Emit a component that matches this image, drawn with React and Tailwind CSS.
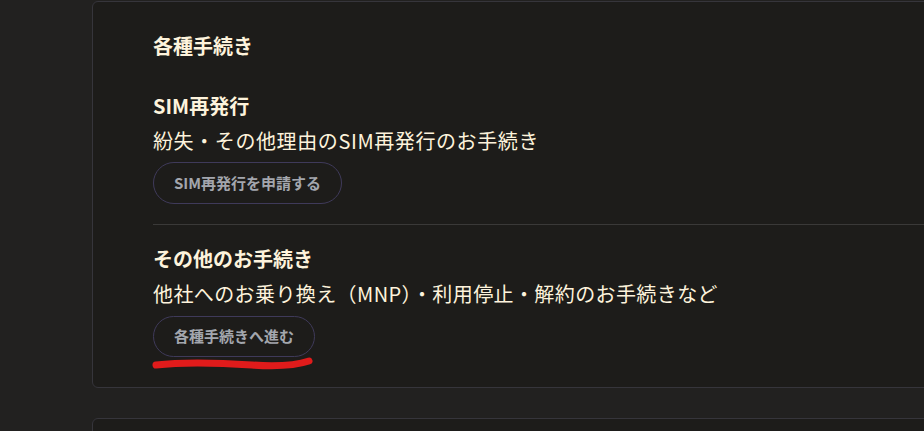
export default function App() {
  return (
    <div
      className="h-[431px] w-[924px] overflow-hidden bg-[#222120] text-[#fdf3dc]"
      style={{ fontFamily: '"Noto Sans CJK JP", "Noto Sans", sans-serif' }}
    >
      <div className="ml-[92px] mt-px w-[940px] rounded-md border border-[#36353b] bg-[#1d1c1a] px-[60px] pt-[29px] pb-[30px]">
        <h2 className="text-[20px] font-bold leading-[30px]">各種手続き</h2>

        <section className="mt-[30px]">
          <h3 className="text-[20px] font-bold leading-[30px]">SIM再発行</h3>
          <p className="mt-[5px] text-[20px] leading-[30px] tracking-[0.6px]">紛失・その他理由のSIM再発行のお手続き</p>
          <button className="mt-[6px] h-[42px] rounded-full border border-[#3f3a5a] px-5 text-[15px] font-bold text-[#a3a6ad]">
            SIM再発行を申請する
          </button>
        </section>

        <div className="mt-[20px] h-px bg-[#3a3938]" />

        <section className="relative mt-[19px]">
          <h3 className="text-[20px] font-bold leading-[30px]">その他のお手続き</h3>
          <p className="mt-[5px] text-[20px] leading-[30px] tracking-[0.4px]">他社へのお乗り換え（MNP）・利用停止・解約のお手続きなど</p>
          <button className="mt-[7px] h-[41px] rounded-full border border-[#3f3a5a] px-5 text-[15px] font-bold text-[#a3a6ad]">
            各種手続きへ進む
          </button>
          {/* hand-drawn red underline */}
          <svg className="absolute left-[-1px] top-[113px]" width="162" height="14" viewBox="0 0 162 14">
            <path
              d="M4 8 C 30 5, 70 6, 100 8 S 145 8, 157 4"
              stroke="#e01b1b"
              strokeWidth="7"
              strokeLinecap="round"
              fill="none"
            />
          </svg>
        </section>
      </div>

      <div className="ml-[92px] mt-[30px] h-[40px] w-[940px] rounded-md border border-[#36353b] bg-[#1d1c1a]" />
    </div>
  )
}
